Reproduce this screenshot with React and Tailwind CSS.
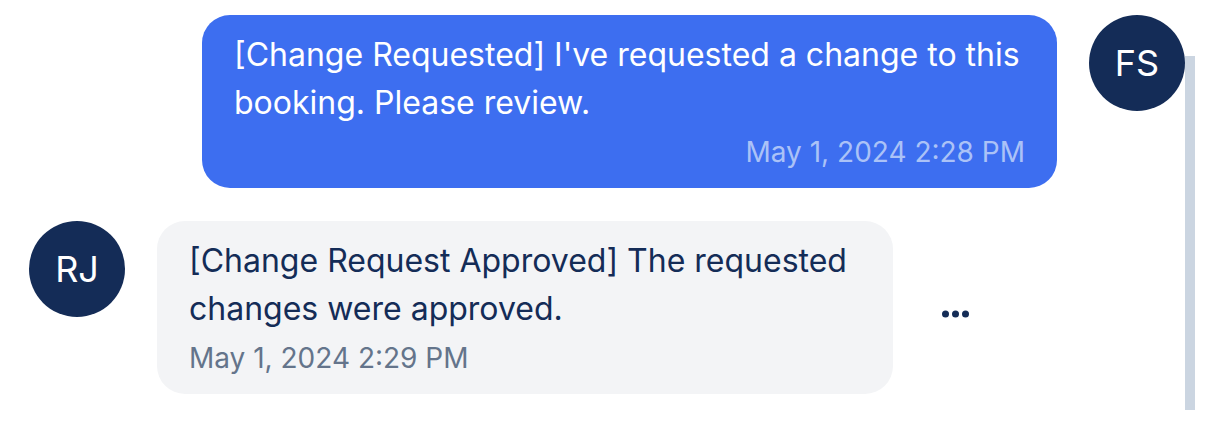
export default function App() {
  return (
    <div className="w-[1222px] h-[426px] bg-white flex overflow-hidden" style={{ fontFamily: "Inter, 'Noto Sans', sans-serif" }}>
      <div className="w-[1185px] flex flex-col gap-[33px] pt-[15px]">
        <div className="flex justify-end items-start gap-8">
          <div className="w-[855px] bg-[#3d6ef0] rounded-[28px] px-8 pt-4 pb-4">
            <p className="text-white text-[32px] leading-[48px]">
              [Change Requested] I've requested a change to this booking. Please review.
            </p>
            <p className="text-[#abc2f7] text-[28px] leading-10 mt-[5px] text-right">May 1, 2024 2:28 PM</p>
          </div>
          <div className="w-24 h-24 shrink-0 rounded-full bg-[#142c57] flex items-center justify-center text-white text-[36px]">FS</div>
        </div>
        <div className="flex items-start pl-[29px]">
          <div className="w-24 h-24 shrink-0 rounded-full bg-[#142c57] flex items-center justify-center text-white text-[36px]">RJ</div>
          <div className="ml-8 w-[736px] bg-[#f3f4f6] rounded-[28px] px-8 pt-4 pb-4">
            <p className="text-[#142c57] text-[32px] leading-[48px]">
              [Change Request Approved] The requested changes were approved.
            </p>
            <p className="text-[#64748b] text-[28px] leading-10 mt-[5px]">May 1, 2024 2:29 PM</p>
          </div>
          <button className="ml-[49px] mt-[89px] flex items-center">
            <svg width="28" height="8" viewBox="0 0 28 8">
              <circle cx="3.5" cy="4" r="3.5" fill="#142c57" />
              <circle cx="13.5" cy="4" r="3.5" fill="#142c57" />
              <circle cx="23.5" cy="4" r="3.5" fill="#142c57" />
            </svg>
          </button>
        </div>
      </div>
      <div className="w-[10px] pt-[56px] pb-[16px] flex flex-col">
        <div className="flex-1 bg-[#cbd5e1]" />
      </div>
    </div>
  );
}
